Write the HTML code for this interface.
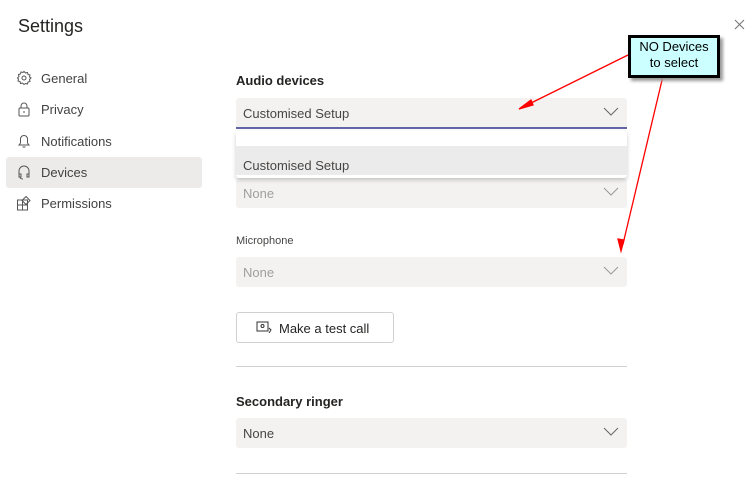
<!DOCTYPE html>
<html><head><style>
body{margin:0;width:754px;height:499px;background:#fff;font-family:"Liberation Sans",sans-serif;position:relative;overflow:hidden;color:#252423}
.a{position:absolute}
.nav{left:16px;font-size:13px;color:#424242;display:flex;align-items:center}
.nav svg{width:16px;height:16px;margin-right:9px}
.sel{position:absolute;left:236px;width:391px;height:30px;background:#f3f2f1;border-radius:3px;font-size:13px;color:#a19f9d}
.sel span{position:absolute;left:7px;top:8px}
.sel svg{position:absolute;right:8px;top:9px}
</style></head><body>
<div class="a" style="left:18px;top:16px;font-size:18px;color:#252423">Settings</div>
<svg class="a" style="left:734px;top:19px" width="11" height="11" viewBox="0 0 11 11"><path d="M1 1l9 9M10 1l-9 9" stroke="#777" stroke-width="1.1"/></svg>
<div class="a" style="left:6px;top:157px;width:196px;height:31px;background:#edebe9;border-radius:3px"></div>
<div class="a nav" style="top:70px"><svg viewBox="0 0 16 16" fill="none" stroke="#555"><circle cx="8" cy="8" r="2"/><path d="M8 1.5l1.5 1.5 2-.5.5 2 2 .5-.5 2 1.5 1-1.5 1.5.5 2-2 .5-.5 2-2-.5L8 14.5 6.5 13l-2 .5-.5-2-2-.5.5-2L1.5 8 3 6.5l-.5-2 2-.5.5-2 2 .5z"/></svg>General</div>
<div class="a nav" style="top:101px"><svg viewBox="0 0 16 16" fill="none" stroke="#555"><rect x="3" y="7" width="10" height="8" rx="1"/><path d="M5 7V5a3 3 0 016 0v2M8 10v2"/></svg>Privacy</div>
<div class="a nav" style="top:133px"><svg viewBox="0 0 16 16" fill="none" stroke="#555"><path d="M3 12h10l-1.5-2V6a3.5 3.5 0 00-7 0v4zM6.5 14h3"/></svg>Notifications</div>
<div class="a nav" style="top:164px"><svg viewBox="0 0 16 16" fill="none" stroke="#555"><path d="M3 11V7a5 5 0 0110 0v4M3 10h2v3H3zM11 10h2v3h-2zM4 13c0 1 1 2 3 2"/></svg>Devices</div>
<div class="a nav" style="top:195px"><svg viewBox="0 0 16 16" fill="none" stroke="#555"><rect x="1.5" y="5" width="10" height="10"/><path d="M6.5 5v10M1.5 10h10M10 1.5l4 4-4 4-4-4z"/></svg>Permissions</div>

<div class="a" style="left:236px;top:73px;font-size:13px;font-weight:bold">Audio devices</div>
<div class="sel" style="top:98px;border-bottom:2px solid #6264a7;border-radius:3px 3px 0 0;height:29px"><span style="color:#484644">Customised Setup</span><svg width="16" height="10" viewBox="0 0 16 10"><path d="M1 1l7 7 7-7" fill="none" stroke="#666"/></svg></div>
<div class="sel" style="top:178px"><span>None</span><svg width="16" height="10" viewBox="0 0 16 10"><path d="M1 1l7 7 7-7" fill="none" stroke="#999"/></svg></div>
<div class="a" style="left:236px;top:131px;width:391px;height:47px;background:#fff;box-shadow:0 2px 4px rgba(0,0,0,.2);border-radius:3px"><div style="position:absolute;top:15px;left:0;right:0;height:29px;background:#ebebeb;font-size:13px;color:#484644"><span style="position:absolute;left:7px;top:12px">Customised Setup</span></div></div>
<div class="a" style="left:236px;top:235px;font-size:11px;color:#484644">Microphone</div>
<div class="sel" style="top:257px"><span>None</span><svg width="16" height="10" viewBox="0 0 16 10"><path d="M1 1l7 7 7-7" fill="none" stroke="#999"/></svg></div>
<div class="a" style="left:236px;top:312px;width:156px;height:29px;border:1px solid #d1d1d1;border-radius:3px;font-size:13px;color:#252423"><svg class="a" style="left:19px;top:8px" width="16" height="13" viewBox="0 0 16 13" fill="none" stroke="#333"><rect x="1" y="1" width="11" height="9"/><circle cx="6.5" cy="5" r="1.5"/><path d="M13 7l2 2-2 3"/></svg><span class="a" style="left:42px;top:8px">Make a test call</span></div>
<div class="a" style="left:236px;top:366px;width:391px;height:1px;background:#d1d1d1"></div>
<div class="a" style="left:236px;top:394px;font-size:13px;font-weight:bold">Secondary ringer</div>
<div class="sel" style="top:418px"><span style="color:#484644">None</span><svg width="16" height="10" viewBox="0 0 16 10"><path d="M1 1l7 7 7-7" fill="none" stroke="#666"/></svg></div>
<div class="a" style="left:236px;top:473px;width:391px;height:1px;background:#d1d1d1"></div>

<svg class="a" style="left:0;top:0" width="754" height="499"><g stroke="#f00" stroke-width="1.3" fill="#f00"><line x1="628" y1="55" x2="525" y2="106"/><path d="M519 109l12-9 2 5z"/><line x1="663" y1="76" x2="623" y2="244"/><path d="M621 251l-3-12 6 1z"/></g></svg>
<div class="a" style="left:628px;top:35px;width:86px;height:36px;background:#ccffff;border:3px solid #000;box-shadow:3px 3px 3px #999;font-size:13px;color:#000;text-align:center;line-height:16px;padding-top:1px">NO Devices<br>to select</div>
</body></html>
